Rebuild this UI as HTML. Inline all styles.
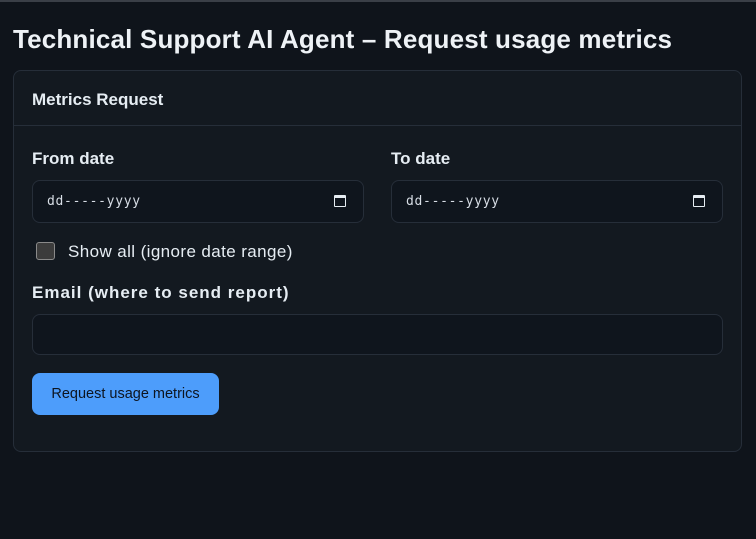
<!DOCTYPE html>
<html><head><style>
*{box-sizing:border-box;margin:0;padding:0}
html,body{width:756px;height:539px;overflow:hidden;background:#0f141b;font-family:"Liberation Sans",sans-serif;color:#e6edf3}
body{border-top:2px solid #3a3f47}
h1{position:absolute;left:13px;top:24px;font-size:26px;font-weight:bold;color:#eef2f6;letter-spacing:0.17px}
.card{position:absolute;left:13px;top:70px;width:729px;height:382px;background:#131920;border:1px solid #262e39;border-radius:8px}
.hd{height:55px;border-bottom:1px solid #262e39;padding:19px 0 0 18px;font-size:17px;font-weight:bold}
.lbl{position:absolute;font-size:17px;font-weight:bold}
.in{position:absolute;height:43px;background:#0f151d;border:1px solid #262e39;border-radius:8px;font-family:"DejaVu Sans Mono","Liberation Mono",monospace;font-size:13px;padding:13px 0 0 14px;color:#d8dee6;letter-spacing:0.7px}
.cal{position:absolute;right:17px;top:14px;width:12px;height:12px;border:1.5px solid #e6edf3;border-top-width:3px;border-radius:1px}
.cb{position:absolute;left:22px;top:171px;width:19px;height:18px;background:#3c3c3c;border:1px solid #8a8a8a;border-radius:3px}
.btn{position:absolute;left:18px;top:302px;width:187px;height:42px;background:#4d9dfb;border-radius:8px;color:#0d1520;font-size:14.5px;text-align:center;line-height:42px}
</style></head><body>
<h1>Technical Support AI Agent – Request usage metrics</h1>
<div class="card">
<div class="hd">Metrics Request</div>
<div class="lbl" style="left:18px;top:78px">From date</div>
<div class="lbl" style="left:377px;top:78px">To date</div>
<div class="in" style="left:18px;top:109px;width:332px">dd-----yyyy<span class="cal"></span></div>
<div class="in" style="left:377px;top:109px;width:332px">dd-----yyyy<span class="cal"></span></div>
<div class="cb"></div>
<div style="position:absolute;left:54px;top:171px;font-size:17px;color:#e6edf3;letter-spacing:0.4px">Show all (ignore date range)</div>
<div class="lbl" style="left:18px;top:212px;letter-spacing:1px">Email (where to send report)</div>
<div class="in" style="left:18px;top:243px;width:691px;height:41px"></div>
<div class="btn">Request usage metrics</div>
</div>
</body></html>
